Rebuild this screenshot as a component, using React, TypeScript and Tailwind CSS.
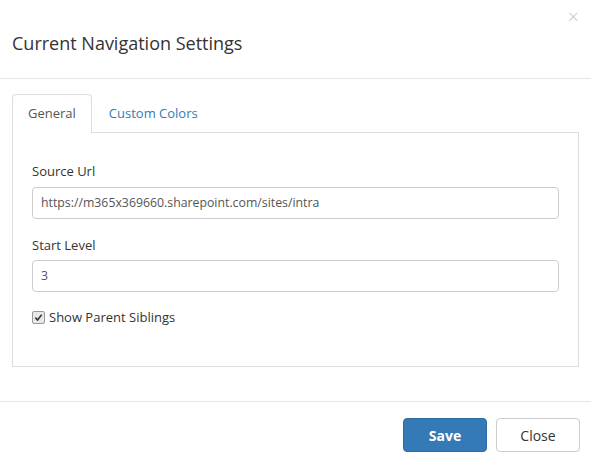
import React from 'react';

const font = { fontFamily: '"Open Sans", "Noto Sans", sans-serif' };

export default function App() {
  return (
    <div className="w-[591px] h-[467px] bg-white text-[#333] flex flex-col" style={font}>
      <div className="relative h-[79px] border-b border-[#e5e5e5] px-[12px] flex items-center shrink-0">
        <h4 className="text-[18px] leading-none text-[#333] pt-[8px]">Current Navigation Settings</h4>
        <button className="absolute right-[12px] top-[7px] text-[20px] leading-none text-[#c8c8c8] font-light">×</button>
      </div>

      <div className="px-[12px] pt-[15px] shrink-0">
        <div className="flex h-[39px] border-b border-[#ddd]">
          <div className="h-[40px] px-[15px] flex items-center border border-[#ddd] border-b-white rounded-t-[4px] bg-white text-[13px] text-[#555]">
            General
          </div>
          <div className="ml-[2px] h-[39px] px-[15px] flex items-center text-[13px] text-[#337ab7]">
            Custom Colors
          </div>
        </div>
        <div className="h-[234px] border border-t-0 border-[#ddd] px-[19px] pt-[29px]">
          <label className="block text-[13px] leading-[18px] text-[#333] mb-[7px]">Source Url</label>
          <div className="h-[32px] border border-[#ccc] rounded-[4px] px-[8px] flex items-center text-[12.3px] text-[#555]">
            https://m365x369660.sharepoint.com/sites/intra
          </div>
          <label className="block text-[13px] leading-[18px] text-[#333] mt-[17px] mb-[6px]">Start Level</label>
          <div className="h-[32px] border border-[#ccc] rounded-[4px] px-[8px] flex items-center text-[12.3px] text-[#555]">
            3
          </div>
          <label className="flex items-center gap-[4px] mt-[16px] text-[13px] text-[#333]">
            <span className="w-[13px] h-[13px] border border-[#999] rounded-[2px] bg-[#e8e8e8] flex items-center justify-center">
              <svg width="9" height="9" viewBox="0 0 10 10">
                <path d="M1.5 5.2 L4 7.8 L8.6 1.8" fill="none" stroke="#333" strokeWidth="1.8" />
              </svg>
            </span>
            Show Parent Siblings
          </label>
        </div>
      </div>

      <div className="h-[34px] shrink-0" />

      <div className="flex-1 border-t border-[#e5e5e5] px-[11px] pt-[16px] flex justify-end items-start gap-[9px]">
        <button className="w-[84px] h-[34px] rounded-[4px] bg-[#337ab7] border border-[#2e6da4] text-white text-[14px] font-bold">
          Save
        </button>
        <button className="w-[84px] h-[34px] rounded-[4px] bg-white border border-[#ccc] text-[#333] text-[14px]">
          Close
        </button>
      </div>
    </div>
  );
}
